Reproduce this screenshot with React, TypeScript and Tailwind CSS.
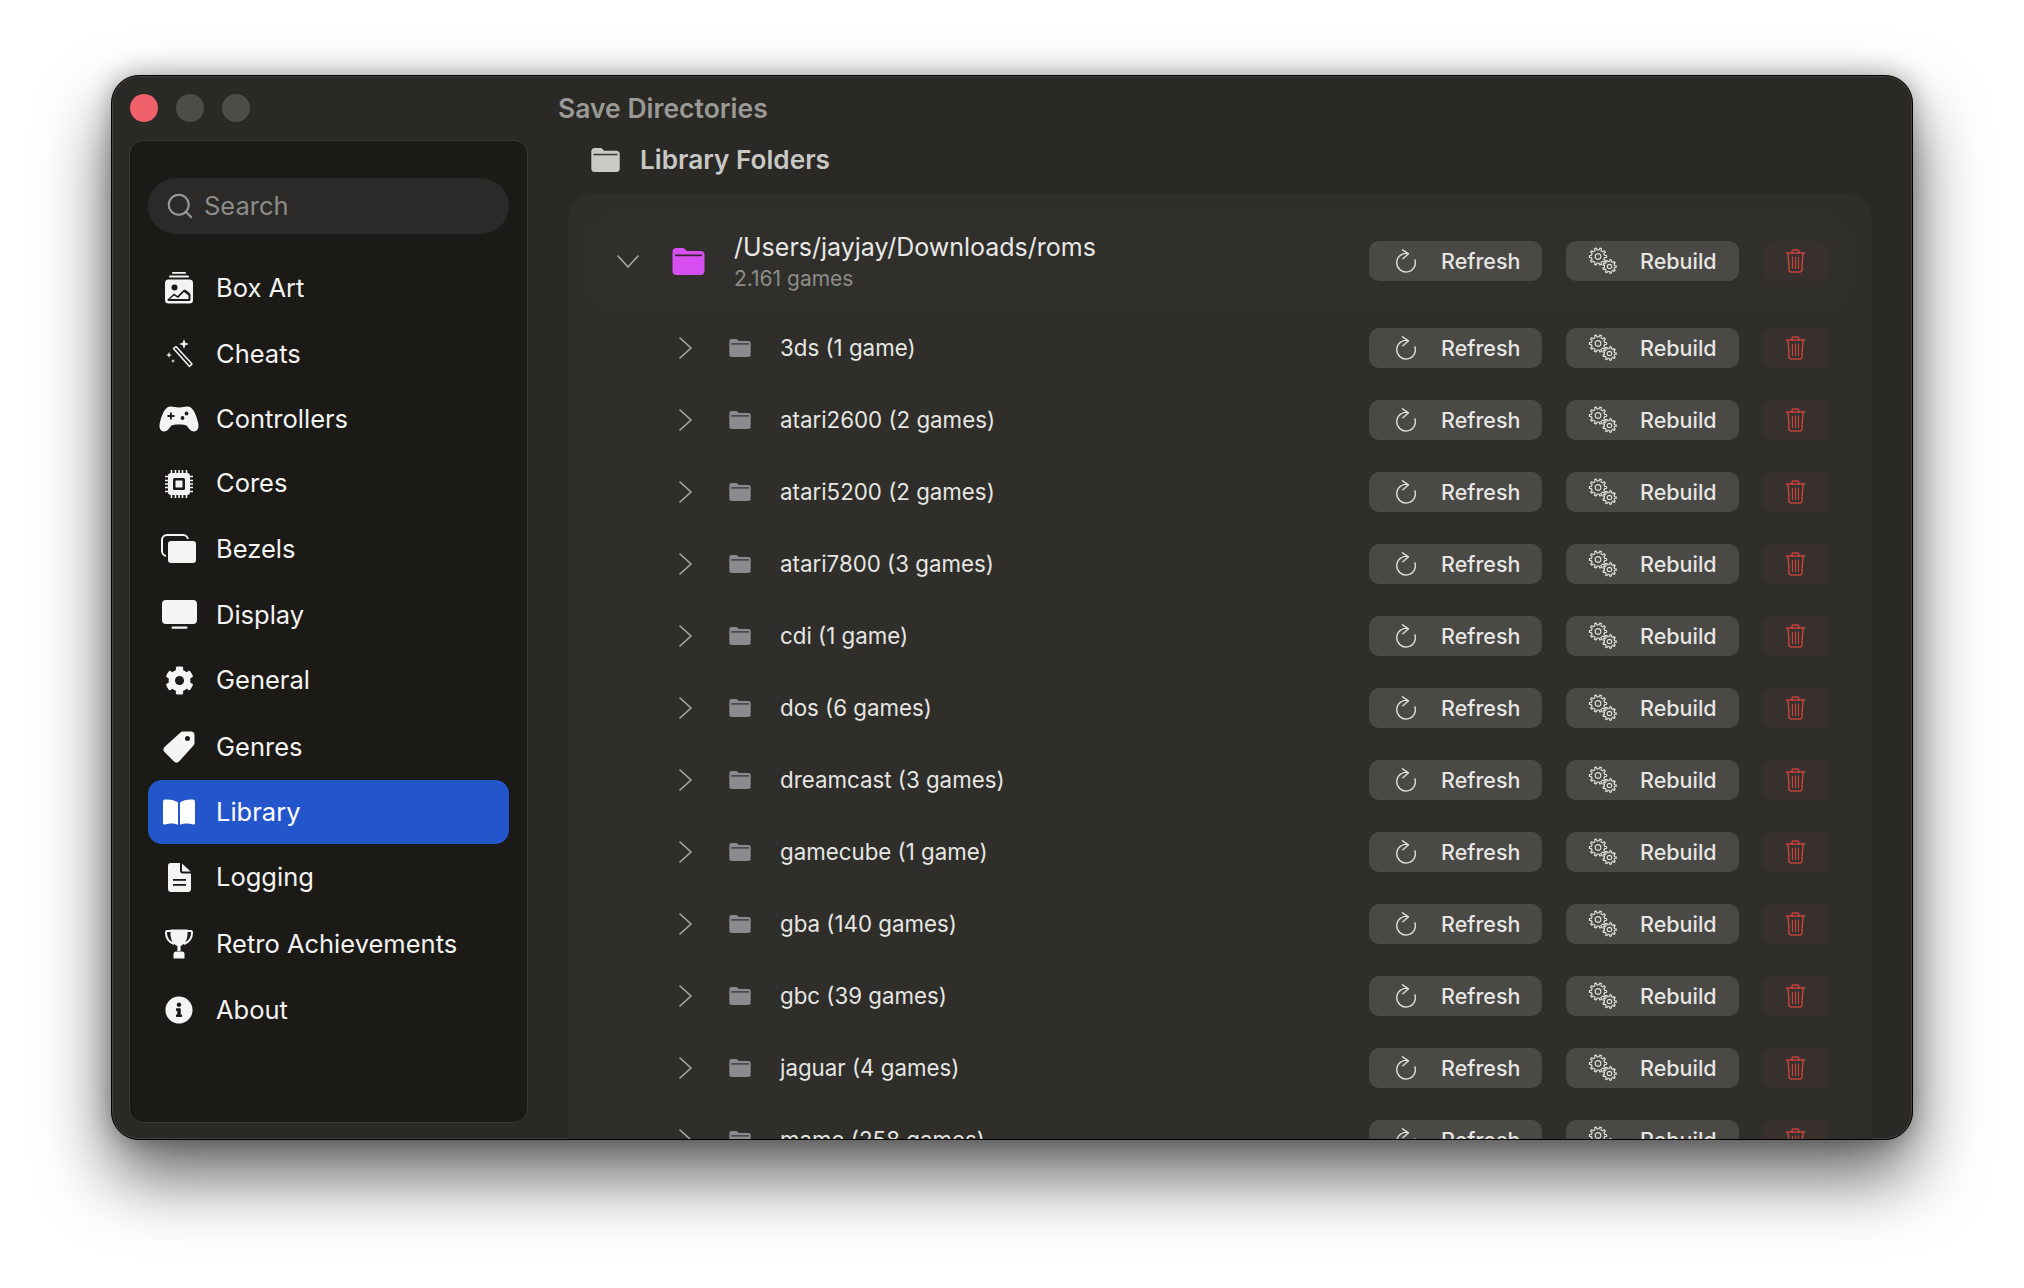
import React from 'react'
import { Search } from 'lucide-react'
import { FaCog, FaInfoCircle } from 'react-icons/fa'

const FOLDERS = [
    '3ds (1 game)',
    'atari2600 (2 games)',
    'atari5200 (2 games)',
    'atari7800 (3 games)',
    'cdi (1 game)',
    'dos (6 games)',
    'dreamcast (3 games)',
    'gamecube (1 game)',
    'gba (140 games)',
    'gbc (39 games)',
    'jaguar (4 games)',
    'mame (258 games)',
]

function gearPath(cx: number, cy: number, rOut: number, rIn: number, teeth: number) {
    const pts: string[] = []
    const step = (Math.PI * 2) / teeth
    for (let i = 0; i < teeth; i++) {
        const a = i * step
        const list: [number, number][] = [
            [rIn, a - step * 0.5],
            [rIn, a - step * 0.26],
            [rOut, a - step * 0.16],
            [rOut, a + step * 0.16],
            [rIn, a + step * 0.26],
        ]
        list.forEach(([r, t]) => pts.push(`${(cx + r * Math.cos(t)).toFixed(2)} ${(cy + r * Math.sin(t)).toFixed(2)}`))
    }
    return 'M' + pts.join('L') + 'Z'
}

function BoxArtIcon() {
    return (
        <svg width="30" height="32" viewBox="0 0 30 32" className="text-[#f4f4f2]" fill="currentColor">
            <rect x="8" y="0" width="14" height="1.8" rx="0.9" />
            <rect x="5" y="3.6" width="20" height="2" rx="1" />
            <rect x="1" y="7.5" width="28" height="24" rx="3.5" />
            <circle cx="10.5" cy="15.5" r="3" fill="#1b1a17" />
            <path d="M3.5 27.5 L10 21.5 L13.5 24 L20 17.5 C23 18.5 25 20 26.5 22.5 V27 C26.5 28.5 26 29 25 29 H5 C4 29 3.5 28.5 3.5 27.5Z" fill="#1b1a17" />
            <path d="M6 27 L10 23.5 L14 26 L20 20 L24.5 23.5 V27Z" fill="currentColor" />
        </svg>
    )
}

function CheatsIcon() {
    return (
        <svg width="30" height="30" viewBox="0 0 30 30" className="text-[#f4f4f2]" fill="currentColor">
            <path d="M9.5 9.5 L12 7.5 L28 25 L25.5 27.5Z" fill="none" stroke="currentColor" strokeWidth="1.5" strokeLinejoin="round" />
            <path d="M20 0 L21.3 3.7 L25 5 L21.3 6.3 L20 10 L18.7 6.3 L15 5 L18.7 3.7Z" />
            <path d="M5 13 L5.8 15.2 L8 16 L5.8 16.8 L5 19 L4.2 16.8 L2 16 L4.2 15.2Z" />
            <path d="M9 20 L9.6 21.4 L11 22 L9.6 22.6 L9 24 L8.4 22.6 L7 22 L8.4 21.4Z" />
        </svg>
    )
}

function ControllerIcon() {
    return (
        <svg width="40" height="26" viewBox="0 0 40 26" className="text-[#f4f4f2]">
            <path
                fill="currentColor"
                fillRule="evenodd"
                d="M10 0.8 C13 0 16 1.5 20 1.5 C24 1.5 27 0 30 0.8 C34 1.8 37 8 39.2 17 C40.3 22 38.5 25.5 35 25.5 C32 25.5 30 22.5 27.5 19.5 C26 18 14 18 12.5 19.5 C10 22.5 8 25.5 5 25.5 C1.5 25.5 -0.3 22 0.8 17 C3 8 6 1.8 10 0.8Z"
            />
            <path d="M12 6.5 V13.5 M8.5 10 H15.5" stroke="#1b1a17" strokeWidth="1.8" />
            <circle cx="27.5" cy="7.5" r="1.9" fill="#1b1a17" />
            <circle cx="23.5" cy="12" r="1.9" fill="#1b1a17" />
        </svg>
    )
}

function CoresIcon() {
    return (
        <svg width="28" height="28" viewBox="0 0 28 28" className="text-[#f4f4f2]">
            <path d="M6.5 0 V28 M10.5 0 V28 M14 0 V28 M17.5 0 V28 M21.5 0 V28 M0 6.5 H28 M0 10.5 H28 M0 14 H28 M0 17.5 H28 M0 21.5 H28" stroke="currentColor" strokeWidth="1.6" />
            <rect x="3" y="3" width="22" height="22" rx="3" fill="currentColor" />
            <rect x="8" y="8" width="12" height="12" rx="1.5" fill="#1b1a17" />
            <rect x="10.5" y="10.5" width="7" height="7" rx="0.5" fill="currentColor" />
        </svg>
    )
}

function BezelsIcon() {
    return (
        <svg width="36" height="30" viewBox="0 0 36 30" className="text-[#f4f4f2]">
            <rect x="1" y="1" width="26" height="21" rx="5" fill="none" stroke="currentColor" strokeWidth="2" />
            <rect x="6" y="6" width="30" height="24" rx="4" fill="currentColor" stroke="#1b1a17" strokeWidth="2" />
        </svg>
    )
}

function DisplayIcon() {
    return (
        <svg width="35" height="29" viewBox="0 0 35 29" className="text-[#f4f4f2]" fill="currentColor">
            <rect x="0" y="0" width="35" height="24" rx="4" />
            <rect x="9.5" y="26.6" width="16" height="2.2" rx="1.1" />
        </svg>
    )
}

function TagIcon() {
    return (
        <svg width="32" height="32" viewBox="0 0 32 32" className="text-[#f4f4f2]">
            <path
                fill="currentColor"
                fillRule="evenodd"
                d="M20 0.5 H28 C30 0.5 31.5 2 31.5 4 V12 C31.5 13 31 14 30.5 14.5 L16 30.5 C14.5 32 12.5 32 11 30.5 L1.5 21 C0 19.5 0 17.5 1.5 16 L17.5 1.5 C18 1 19 0.5 20 0.5Z M24.5 5 A2.5 2.5 0 1 0 24.5 10 A2.5 2.5 0 1 0 24.5 5Z"
            />
        </svg>
    )
}

function BookIcon() {
    return (
        <svg width="32" height="26" viewBox="0 0 32 26" className="text-white" fill="currentColor">
            <path d="M15 3.5 C12 1 6 0 2 0.6 C0.8 0.8 0 1.5 0 3 V24 C0 25.2 0.8 25.8 2 25.4 C6 24 11 24 15 25.8Z" />
            <path d="M17 3.5 C20 1 26 0 30 0.6 C31.2 0.8 32 1.5 32 3 V24 C32 25.2 31.2 25.8 30 25.4 C26 24 21 24 17 25.8Z" />
        </svg>
    )
}

function DocIcon() {
    return (
        <svg width="23" height="29" viewBox="0 0 23 29" className="text-[#f4f4f2]" fill="currentColor">
            <path d="M2.5 0 H12 V8 C12 9.5 13 10.5 14.5 10.5 H23 V26 C23 27.8 21.8 29 20 29 H3 C1.2 29 0 27.8 0 26 V2.5 C0 1 1 0 2.5 0Z" />
            <path d="M14 0.4 L22.6 8.6 H15 C14.4 8.6 14 8.2 14 7.6Z" />
            <rect x="5" y="16" width="13" height="1.8" fill="#1b1a17" />
            <rect x="5" y="21" width="13" height="1.8" fill="#1b1a17" />
        </svg>
    )
}

function TrophyIcon() {
    return (
        <svg width="28" height="30" viewBox="0 0 28 30" className="text-[#f4f4f2]">
            <path d="M6 2 H2 C1 2 1 3 1 4 C1 9 4 13 9 15 M22 2 H26 C27 2 27 3 27 4 C27 9 24 13 19 15" fill="none" stroke="currentColor" strokeWidth="2" />
            <path d="M5.5 0.5 H22.5 V5 C22.5 11 19.5 15.5 15.6 17 V22 H12.4 V17 C8.5 15.5 5.5 11 5.5 5Z" fill="currentColor" />
            <path d="M8.5 25 C8.5 23.5 9.5 22.5 11 22.5 H17 C18.5 22.5 19.5 23.5 19.5 25 V29.5 H8.5Z" fill="currentColor" />
        </svg>
    )
}

function FolderIcon({ width, height, color, line }: { width: number; height: number; color: string; line: string }) {
    return (
        <svg width={width} height={height} viewBox="0 0 32 27" fill={color}>
            <path d="M0 4 Q0 0 4 0 H10 Q12 0 13 1.5 L14 3 H28 Q32 3 32 7 V23 Q32 27 28 27 H4 Q0 27 0 23Z" />
            <rect x="2.5" y="6.5" width="27" height="1.7" fill={line} />
        </svg>
    )
}

function ChevronDownIcon() {
    return (
        <svg width="22" height="13" viewBox="0 0 22 13" fill="none" stroke="#a9a8a5" strokeWidth="1.6" strokeLinecap="round" strokeLinejoin="round">
            <path d="M1 1 L11 12 L21 1" />
        </svg>
    )
}

function ChevronRightIcon() {
    return (
        <svg width="13" height="22" viewBox="0 0 13 22" fill="none" stroke="#a9a8a5" strokeWidth="1.6" strokeLinecap="round" strokeLinejoin="round">
            <path d="M1 1 L12 11 L1 21" />
        </svg>
    )
}

function RefreshIcon() {
    return (
        <svg width="20" height="24" viewBox="0 0 20 24" fill="none" stroke="#dcdcd9" strokeWidth="1.4" strokeLinecap="round" strokeLinejoin="round">
            <path d="M18.9 10.8 A9.3 9.3 0 1 1 12 4.6" />
            <path d="M6.5 0.8 L12.5 4.8 L7 9.8" />
        </svg>
    )
}

const BIG_GEAR = gearPath(10, 9.5, 8.6, 6.6, 10)
const SMALL_GEAR = gearPath(21.5, 19.5, 6.8, 5.1, 9)

function RebuildIcon() {
    return (
        <svg width="29" height="28" viewBox="0 0 29 28" fill="none" stroke="#dcdcd9" strokeWidth="1.2" strokeLinejoin="round">
            <path d={BIG_GEAR} />
            <circle cx="10" cy="9.5" r="2.8" />
            <path d={SMALL_GEAR} />
            <circle cx="21.5" cy="19.5" r="2.2" />
        </svg>
    )
}

function TrashIcon() {
    return (
        <svg width="21" height="24" viewBox="0 0 20 24" fill="none" stroke="#c2443f" strokeWidth="1.5" strokeLinecap="round" strokeLinejoin="round">
            <path d="M0.8 4 H19.2" />
            <path d="M6.5 4 V2.5 C6.5 1.5 7 1 8 1 H12 C13 1 13.5 1.5 13.5 2.5 V4" />
            <path d="M2.6 4.5 L3.6 21 C3.7 22.3 4.4 23 5.6 23 H14.4 C15.6 23 16.3 22.3 16.4 21 L17.4 4.5" />
            <path d="M7 8 V19.5 M10 8 V19.5 M13 8 V19.5" strokeWidth="1.2" />
        </svg>
    )
}

function Actions() {
    return (
        <div className="ml-auto flex items-center text-[21.5px] font-medium text-[#e6e6e3]">
            <button className="flex h-10 w-[173px] items-center rounded-[10px] bg-[#4a4945] pl-[27px]">
                <RefreshIcon />
                <span className="ml-[25px]">Refresh</span>
            </button>
            <button className="ml-[24px] flex h-10 w-[173px] items-center rounded-[10px] bg-[#4a4945] pl-[22px]">
                <RebuildIcon />
                <span className="ml-[23px]">Rebuild</span>
            </button>
            <button className="ml-[24px] flex h-10 w-[65px] items-center justify-center rounded-[10px] bg-[#38302c]">
                <TrashIcon />
            </button>
        </div>
    )
}

const NAV: { label: string; icon: React.ReactNode; height: string; active?: boolean }[] = [
    { label: 'Box Art', icon: <BoxArtIcon />, height: 'h-[66.5px]' },
    { label: 'Cheats', icon: <CheatsIcon />, height: 'h-[65.5px]' },
    { label: 'Controllers', icon: <ControllerIcon />, height: 'h-[64px]' },
    { label: 'Cores', icon: <CoresIcon />, height: 'h-[65px]' },
    { label: 'Bezels', icon: <BezelsIcon />, height: 'h-[66px]' },
    { label: 'Display', icon: <DisplayIcon />, height: 'h-[65.5px]' },
    { label: 'General', icon: <FaCog className="text-[29px] text-[#f4f4f2]" />, height: 'h-[66px]' },
    { label: 'Genres', icon: <TagIcon />, height: 'h-[66.5px]' },
    { label: 'Library', icon: <BookIcon />, height: 'h-[64px]', active: true },
    { label: 'Logging', icon: <DocIcon />, height: 'h-[67px]' },
    { label: 'Retro Achievements', icon: <TrophyIcon />, height: 'h-[66px]' },
    { label: 'About', icon: <FaInfoCircle className="text-[28px] text-[#f4f4f2]" />, height: 'h-[66px]' },
]

export default function App() {
    return (
        <div className="h-[1288px] w-[2024px] overflow-hidden bg-white pl-[111px] pt-[75px] font-['Inter',sans-serif]">
            <div className="flex h-[1065px] w-[1802px] overflow-hidden rounded-[28px] border border-black bg-[#2a2925] shadow-[inset_0_0_0_1px_#44433f,0_36px_70px_rgba(0,0,0,0.62),0_0_24px_rgba(0,0,0,0.3)]">
                {/* sidebar */}
                <div className="flex w-[416px] shrink-0 flex-col pb-[16px] pl-[17px]">
                    <div className="flex h-[64px] shrink-0 items-center gap-[18px] pb-[1px] pl-[1px]">
                        <div className="size-7 rounded-full bg-[#ee6169]" />
                        <div className="size-7 rounded-full bg-[#4d4c47]" />
                        <div className="size-7 rounded-full bg-[#4d4c47]" />
                    </div>
                    <div className="flex min-h-0 flex-1 flex-col rounded-[14px] border border-[#3a3933] bg-[#1b1a17] px-[18px] pt-[37px]">
                        <div className="flex h-[56px] items-center rounded-full bg-[#2b2a28] pl-[17px] text-[25.5px] text-[#8c8b88]">
                            <Search size={30} strokeWidth={1.6} className="text-[#999895]" />
                            <span className="ml-[9px]">Search</span>
                        </div>
                        <div className="mt-[21px] flex flex-col">
                            {NAV.map((item) => (
                                <div
                                    key={item.label}
                                    className={`flex items-center rounded-[14px] text-[25.5px] ${item.height} ${item.active ? 'bg-[#2456cb] text-white' : 'text-[#f3f3f1]'}`}
                                >
                                    <div className="flex w-[62px] shrink-0 items-center justify-center">{item.icon}</div>
                                    <span className="ml-[6px]">{item.label}</span>
                                </div>
                            ))}
                        </div>
                    </div>
                </div>

                {/* content */}
                <div className="min-w-0 flex-1 overflow-hidden">
                    <h1 className="flex h-[66px] items-center pl-[30px] text-[26.5px] font-semibold text-[#9a9995]">Save Directories</h1>
                    <div className="flex h-[36px] items-center pl-[63px]">
                        <FolderIcon width={29} height={24} color="#c9c9c6" line="#3a3935" />
                        <h2 className="ml-[20px] text-[26.2px] font-semibold text-[#c8c8c5]">Library Folders</h2>
                    </div>
                    <div className="ml-[40px] mt-[16px] h-[1000px] w-[1304px] rounded-t-[24px] bg-[#2f2e2a] pt-[19px]">
                        <div className="ml-[20px] flex h-[96px] w-[1263px] items-center rounded-[24px] bg-[#302f2b] pl-[29px] pr-[23px]">
                            <ChevronDownIcon />
                            <div className="ml-[33px]">
                                <FolderIcon width={33} height={27} color="#d84ff1" line="#35262f" />
                            </div>
                            <div className="ml-[29px] flex flex-col">
                                <span className="text-[25px] leading-[35px] text-[#e8e8e6]">/Users/jayjay/Downloads/roms</span>
                                <span className="text-[21px] leading-[28px] text-[#8d8c89]">2.161 games</span>
                            </div>
                            <Actions />
                        </div>
                        <div className="mt-[3px]">
                            {FOLDERS.map((name) => (
                                <div key={name} className="flex h-[72px] items-center pl-[111px] pr-[44px]">
                                    <ChevronRightIcon />
                                    <div className="ml-[37px]">
                                        <FolderIcon width={22} height={18} color="#8b8a8e" line="#2f2e2a" />
                                    </div>
                                    <span className="ml-[29px] text-[22.3px] text-[#e6e6e3]">{name}</span>
                                    <Actions />
                                </div>
                            ))}
                        </div>
                    </div>
                </div>
            </div>
        </div>
    )
}
